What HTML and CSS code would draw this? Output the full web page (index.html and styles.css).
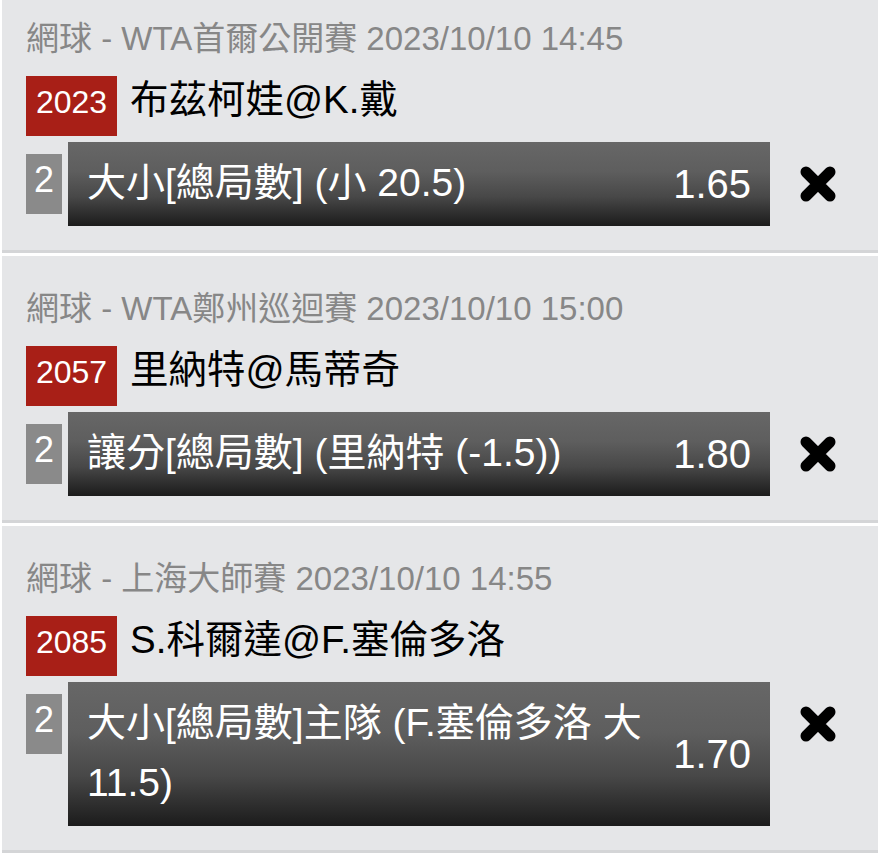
FILE: index.html
```html
<!DOCTYPE html>
<html lang="zh-Hant">
<head>
<meta charset="utf-8">
<link rel="stylesheet" href="styles.css">
</head>
<body>
<div class="list">
  <div class="card">
    <div class="league">網球 - WTA首爾公開賽 2023/10/10 14:45</div>
    <div class="match">
      <span class="code">2023</span>
      <span class="teams">布茲柯娃@K.戴</span>
    </div>
    <div class="sel">
      <span class="num">2</span>
      <div class="bar">
        <div class="bet">大小[總局數] (小 20.5)</div>
        <div class="odds">1.65</div>
      </div>
      <span class="remove"><svg viewBox="0 0 38 38" width="38" height="38"><path d="M7 7 L31 31 M31 7 L7 31" stroke="#000" stroke-width="11" stroke-linecap="round"/></svg></span>
    </div>
  </div>
  <div class="card">
    <div class="league">網球 - WTA鄭州巡迴賽 2023/10/10 15:00</div>
    <div class="match">
      <span class="code">2057</span>
      <span class="teams">里納特@馬蒂奇</span>
    </div>
    <div class="sel">
      <span class="num">2</span>
      <div class="bar">
        <div class="bet">讓分[總局數] (里納特 (-1.5))</div>
        <div class="odds">1.80</div>
      </div>
      <span class="remove"><svg viewBox="0 0 38 38" width="38" height="38"><path d="M7 7 L31 31 M31 7 L7 31" stroke="#000" stroke-width="11" stroke-linecap="round"/></svg></span>
    </div>
  </div>
  <div class="card">
    <div class="league">網球 - 上海大師賽 2023/10/10 14:55</div>
    <div class="match">
      <span class="code">2085</span>
      <span class="teams">S.科爾達@F.塞倫多洛</span>
    </div>
    <div class="sel">
      <span class="num">2</span>
      <div class="bar">
        <div class="bet">大小[總局數]主隊 (F.塞倫多洛 大 11.5)</div>
        <div class="odds">1.70</div>
      </div>
      <span class="remove"><svg viewBox="0 0 38 38" width="38" height="38"><path d="M7 7 L31 31 M31 7 L7 31" stroke="#000" stroke-width="11" stroke-linecap="round"/></svg></span>
    </div>
  </div>
</div>
</body>
</html>
```

FILE: styles.css
```css
html, body {
  margin: 0;
  padding: 0;
  background: #ffffff;
}
body {
  font-family: "Liberation Sans", "Noto Sans CJK TC", sans-serif;
}
.list {
  margin-top: -14px;
  padding-left: 2px;
  width: 876px;
}
.card {
  background: #e5e6e8;
  border-bottom: 3px solid #d4d5d7;
  margin-bottom: 3px;
  padding: 33px 0 24px 24px;
  box-sizing: border-box;
}
.league {
  color: #878787;
  font-size: 33px;
  line-height: 40px;
  white-space: nowrap;
}
.match {
  display: flex;
  align-items: flex-start;
  margin-top: 17px;
  height: 60px;
}
.code {
  background: #a81f17;
  color: #fff;
  font-size: 32px;
  width: 91px;
  height: 60px;
  line-height: 52px;
  padding-bottom: 8px;
  box-sizing: border-box;
  text-align: center;
}
.teams {
  margin-left: 13px;
  font-size: 38.5px;
  line-height: 48px;
  color: #000;
  white-space: nowrap;
}
.sel {
  display: flex;
  align-items: flex-start;
  margin-top: 6px;
}
.num {
  margin-top: 12px;
  width: 36px;
  height: 60px;
  line-height: 52px;
  padding-bottom: 8px;
  box-sizing: border-box;
  background: #8a8a8a;
  color: #fff;
  font-size: 36px;
  text-align: center;
}
.bar {
  margin-left: 6px;
  width: 702px;
  display: flex;
  align-items: center;
  background: linear-gradient(#676767 0%, #5e5e5e 35%, #484848 65%, #1b1b1b 100%);
  color: #fff;
  padding: 11px 19px 13px 19px;
  box-sizing: border-box;
}
.bet {
  flex: 1;
  font-size: 39px;
  line-height: 60px;
}
.odds {
  margin-left: 20px;
  margin-top: 2px;
  font-size: 40px;
}
.remove {
  margin-left: 29px;
  margin-top: 23px;
  width: 38px;
  height: 38px;
  display: block;
  filter: blur(0.7px);
}
.remove svg {
  display: block;
}
```
